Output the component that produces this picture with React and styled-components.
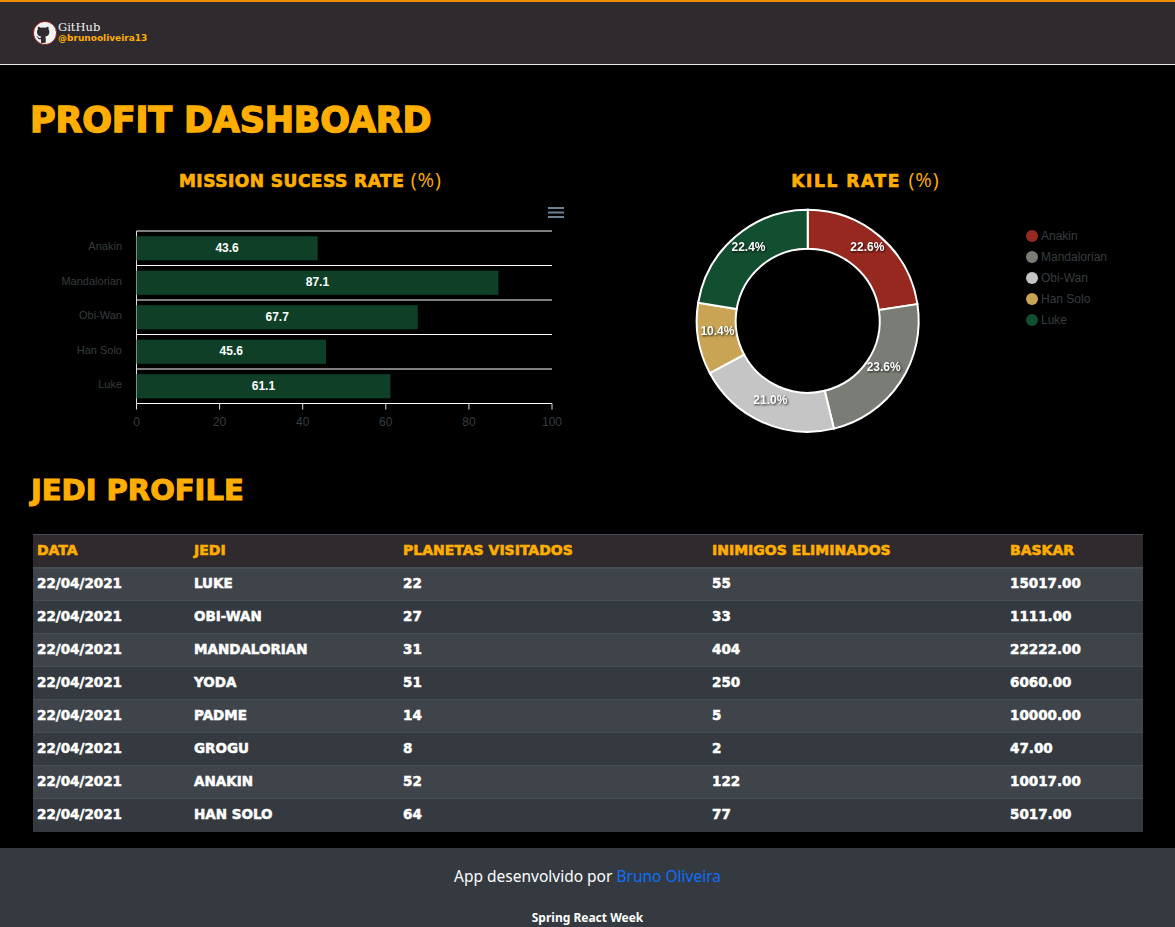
import React from 'react';
import styled, { createGlobalStyle } from 'styled-components';

const GOLD = '#ffae00';

const GlobalStyle = createGlobalStyle`
  * { box-sizing: border-box; }
  body {
    margin: 0;
    background: #000;
    font-family: "Noto Sans", sans-serif;
    color: #fff;
  }
`;

const Nav = styled.header`
  height: 65px;
  background: #2e2a2d;
  border-top: 2px solid #f08c00;
  border-bottom: 1px solid #e6e6e6;
  padding: 0 33px;
  display: flex;
  align-items: center;
`;

const GithubLink = styled.a`
  display: flex;
  align-items: center;
  gap: 1px;
  margin-top: -1px;
`;

const GithubText = styled.div`
  display: flex;
  flex-direction: column;
`;

const GithubName = styled.span`
  font-family: "DejaVu Serif", serif;
  font-size: 11.5px;
  line-height: 11px;
  color: #f2f2f2;
`;

const GithubUser = styled.span`
  font-family: "DejaVu Sans", sans-serif;
  font-weight: 700;
  font-size: 9px;
  line-height: 10px;
  color: ${GOLD};
`;

const Main = styled.main`
  padding: 0 32px 16px 33px;
`;

const PageTitle = styled.h1`
  margin: 0 0 0 -3px;
  padding-top: 34px;
  height: 103px;
  font-family: "DejaVu Sans", sans-serif;
  font-weight: 700;
  font-size: 35px;
  line-height: 42px;
  letter-spacing: -0.2px;
  color: ${GOLD};
  -webkit-text-stroke: 1.4px ${GOLD};
  text-transform: uppercase;
`;

const ChartsRow = styled.section`
  display: grid;
  grid-template-columns: 555px 555px;
`;

const ChartCard = styled.div`
  height: 302px;
`;

const ChartTitle = styled.h5`
  margin: 0;
  height: 34px;
  text-align: center;
  font-family: "DejaVu Sans", sans-serif;
  font-weight: 700;
  font-size: 17px;
  line-height: 24px;
  letter-spacing: ${(p) => p.$spacing}px;
  color: ${GOLD};
  -webkit-text-stroke: 0.7px ${GOLD};
  text-transform: uppercase;
`;

const Percent = styled.span`
  font-family: "Open Sans", sans-serif;
  font-weight: 400;
  font-size: 20px;
  letter-spacing: 1px;
  -webkit-text-stroke: 0;
`;

const ChartSvg = styled.svg`
  display: block;
  flex: none;
`;

const MenuIcon = styled.svg`
  display: block;
  margin: 5px 0 11px 515px;
`;

const AxisLabel = styled.text`
  font-family: "Liberation Sans", Arial, sans-serif;
  font-size: ${(p) => p.$size}px;
  fill: #373d3f;
`;

const BarLabel = styled.text`
  font-family: "Liberation Sans", Arial, sans-serif;
  font-size: 12px;
  font-weight: 700;
  fill: #fff;
  text-anchor: middle;
`;

const SliceLabel = styled.text`
  font-family: "Liberation Sans", Arial, sans-serif;
  font-size: 12px;
  font-weight: 700;
  fill: #fff;
  text-anchor: middle;
  dominant-baseline: central;
  filter: drop-shadow(1px 1px 1px rgba(0, 0, 0, 0.8));
`;

const DonutArea = styled.div`
  display: flex;
  align-items: flex-start;
  margin-top: 3px;
`;

const Legend = styled.ul`
  list-style: none;
  margin: 0;
  padding: 20px 0 0;
`;

const LegendItem = styled.li`
  display: flex;
  align-items: center;
  gap: 3px;
  height: 21px;
  font-family: "Liberation Sans", Arial, sans-serif;
  font-size: 12px;
  color: #373d3f;
`;

const LegendDot = styled.span`
  width: 12px;
  height: 12px;
  border-radius: 50%;
  background: ${(p) => p.$color};
`;

const SectionTitle = styled.h2`
  margin: 0 0 0 -2px;
  height: 64px;
  padding-top: 2px;
  font-family: "DejaVu Sans", sans-serif;
  font-weight: 700;
  font-size: 29px;
  line-height: 36px;
  color: ${GOLD};
  -webkit-text-stroke: 1.1px ${GOLD};
  text-transform: uppercase;
`;

const Table = styled.table`
  width: 1110px;
  border-collapse: collapse;
  table-layout: fixed;
  font-family: "DejaVu Sans", sans-serif;
  text-transform: uppercase;
`;

const HeadCell = styled.th`
  height: 33px;
  padding: 0 0 1px 4px;
  text-align: left;
  background: #2e2a2d;
  border-top: 1px solid #454d55;
  border-bottom: 2px solid #454d55;
  color: ${GOLD};
  font-size: 14px;
  font-weight: 700;
  -webkit-text-stroke: 0.6px ${GOLD};
  width: ${(p) => p.$width}px;
`;

const Row = styled.tr`
  background: ${(p) => (p.$odd ? '#3e444a' : '#343a40')};
`;

const Cell = styled.td`
  height: 33px;
  padding: 0 0 2px 4px;
  border-top: 1px solid #454d55;
  color: #fff;
  font-size: 13.5px;
  font-weight: 700;
  -webkit-text-stroke: 0.5px #fff;
`;

const Footer = styled.footer`
  height: 79px;
  background: #343a40;
  text-align: center;
`;

const FooterLine = styled.p`
  margin: 0;
  padding-top: 17px;
  font-size: 15.5px;
  line-height: 22px;
`;

const FooterLink = styled.a`
  color: #0d6efd;
  text-decoration: none;
`;

const FooterNote = styled.small`
  display: block;
  margin-top: 23px;
  font-size: 12px;
  font-weight: 700;
  line-height: 16px;
`;

const bars = [
  { name: 'Anakin', value: 43.6 },
  { name: 'Mandalorian', value: 87.1 },
  { name: 'Obi-Wan', value: 67.7 },
  { name: 'Han Solo', value: 45.6 },
  { name: 'Luke', value: 61.1 },
];

const slices = [
  { name: 'Anakin', value: 22.6, color: '#962820' },
  { name: 'Mandalorian', value: 23.6, color: '#797d75' },
  { name: 'Obi-Wan', value: 21.0, color: '#c4c5c4' },
  { name: 'Han Solo', value: 10.4, color: '#c8a454' },
  { name: 'Luke', value: 22.4, color: '#124f30' },
];

const columns = [
  { title: 'Data', width: 157 },
  { title: 'Jedi', width: 209 },
  { title: 'Planetas visitados', width: 309 },
  { title: 'Inimigos eliminados', width: 298 },
  { title: 'Baskar', width: 137 },
];

const rows = [
  ['22/04/2021', 'Luke', '22', '55', '15017.00'],
  ['22/04/2021', 'Obi-Wan', '27', '33', '1111.00'],
  ['22/04/2021', 'Mandalorian', '31', '404', '22222.00'],
  ['22/04/2021', 'Yoda', '51', '250', '6060.00'],
  ['22/04/2021', 'Padme', '14', '5', '10000.00'],
  ['22/04/2021', 'Grogu', '8', '2', '47.00'],
  ['22/04/2021', 'Anakin', '52', '122', '10017.00'],
  ['22/04/2021', 'Han Solo', '64', '77', '5017.00'],
];

// coordenadas del gráfico de barras dentro de su svg
const PLOT_X = 103.5;
const PLOT_W = 415.5;
const PLOT_Y = 2;
const ROW_H = 34.5;

const BarChart = () => (
  <ChartSvg width="555" height="205" viewBox="0 0 555 205">
    {[0, 1, 2, 3, 4, 5].map((i) => (
      <line key={i} x1={PLOT_X} x2={PLOT_X + PLOT_W} y1={PLOT_Y + i * ROW_H} y2={PLOT_Y + i * ROW_H} stroke="#fff" />
    ))}
    <line x1={PLOT_X} x2={PLOT_X} y1={PLOT_Y} y2={PLOT_Y + 5 * ROW_H} stroke="#e0e0e0" />
    {[0, 20, 40, 60, 80, 100].map((t) => {
      const x = PLOT_X + (t / 100) * PLOT_W;
      return (
        <g key={t}>
          <line x1={x} x2={x} y1={PLOT_Y + 5 * ROW_H} y2={PLOT_Y + 5 * ROW_H + 6} stroke="#e0e0e0" />
          <AxisLabel $size={12} x={x} y={PLOT_Y + 5 * ROW_H + 22} textAnchor="middle">{t}</AxisLabel>
        </g>
      );
    })}
    {bars.map((b, i) => {
      const top = PLOT_Y + i * ROW_H;
      const w = (b.value / 100) * PLOT_W;
      return (
        <g key={b.name}>
          <AxisLabel $size={11} x="89" y={top + 19} textAnchor="end">{b.name}</AxisLabel>
          <rect x={PLOT_X} y={top + 5.2} width={w} height="24.1" fill="#103f28" />
          <BarLabel x={PLOT_X + w / 2} y={top + 20.5}>{b.value}</BarLabel>
        </g>
      );
    })}
  </ChartSvg>
);

const CX = 219.7;
const CY = 115.8;
const R_OUT = 111;
const R_IN = 72;

const polar = (r, pct) => {
  const a = (pct / 100) * Math.PI * 2;
  return [CX + r * Math.sin(a), CY - r * Math.cos(a)];
};

const arcPath = (from, to) => {
  const [x1, y1] = polar(R_OUT, from);
  const [x2, y2] = polar(R_OUT, to);
  const [x3, y3] = polar(R_IN, to);
  const [x4, y4] = polar(R_IN, from);
  const large = to - from > 50 ? 1 : 0;
  return `M${x1} ${y1}A${R_OUT} ${R_OUT} 0 ${large} 1 ${x2} ${y2}L${x3} ${y3}A${R_IN} ${R_IN} 0 ${large} 0 ${x4} ${y4}Z`;
};

const DonutChart = () => {
  let acc = 0;
  return (
    <ChartSvg width="438" height="235" viewBox="0 0 438 235">
      {slices.map((s) => {
        const from = acc;
        acc += s.value;
        const [lx, ly] = polar(91.5, from + s.value / 2);
        return (
          <g key={s.name}>
            <path d={arcPath(from, acc)} fill={s.color} stroke="#fff" strokeWidth="2" />
            <SliceLabel x={lx} y={ly - 4.5}>{s.value.toFixed(1)}%</SliceLabel>
          </g>
        );
      })}
    </ChartSvg>
  );
};

const GithubIcon = () => (
  <svg width="24" height="24" viewBox="0 0 16 16">
    <circle cx="8" cy="8" r="7.7" fill="#f4f4f4" stroke="#8e1414" strokeWidth="0.6" />
    <path
      fill="#2e2a2d"
      d="M5.3 14.6v-2.4c-1.4.2-1.9-.4-2.1-.9-.1-.3-.4-.7-.7-.8-.2-.1-.5-.4 0-.4.5 0 .8.4.9.6.5.9 1.3.7 1.8.5 0-.4.2-.7.4-.8-1.5-.2-2.9-.8-2.9-3.2 0-.7.2-1.3.6-1.7-.1-.2-.3-.8.1-1.7 0 0 .6-.2 1.8.7a6 6 0 0 1 3.2 0c1.2-.9 1.8-.7 1.8-.7.4.9.2 1.5.1 1.7.4.4.6 1 .6 1.7 0 2.4-1.4 3-2.9 3.2.2.2.5.6.5 1.2v2.9Z"
    />
  </svg>
);

export default function App() {
  return (
    <>
      <GlobalStyle />
      <Nav>
        <GithubLink>
          <GithubIcon />
          <GithubText>
            <GithubName>GitHub</GithubName>
            <GithubUser>@brunooliveira13</GithubUser>
          </GithubText>
        </GithubLink>
      </Nav>
      <Main>
        <PageTitle>Profit Dashboard</PageTitle>
        <ChartsRow>
          <ChartCard>
            <ChartTitle $spacing={0.5}>Mission Sucess Rate <Percent>(%)</Percent></ChartTitle>
            <MenuIcon width="16" height="11" viewBox="0 0 16 11">
              <rect y="0" width="16" height="2" fill="#6e8192" />
              <rect y="4.5" width="16" height="2" fill="#6e8192" />
              <rect y="9" width="16" height="2" fill="#6e8192" />
            </MenuIcon>
            <BarChart />
          </ChartCard>
          <ChartCard>
            <ChartTitle $spacing={1.6}>Kill Rate <Percent>(%)</Percent></ChartTitle>
            <DonutArea>
              <DonutChart />
              <Legend>
                {slices.map((s) => (
                  <LegendItem key={s.name}>
                    <LegendDot $color={s.color} />
                    {s.name}
                  </LegendItem>
                ))}
              </Legend>
            </DonutArea>
          </ChartCard>
        </ChartsRow>
        <SectionTitle>Jedi Profile</SectionTitle>
        <Table>
          <thead>
            <tr>
              {columns.map((c) => (
                <HeadCell key={c.title} $width={c.width}>{c.title}</HeadCell>
              ))}
            </tr>
          </thead>
          <tbody>
            {rows.map((r, i) => (
              <Row key={r[1]} $odd={i % 2 === 0}>
                {r.map((v, j) => (
                  <Cell key={j}>{v}</Cell>
                ))}
              </Row>
            ))}
          </tbody>
        </Table>
      </Main>
      <Footer>
        <FooterLine>App desenvolvido por <FooterLink>Bruno Oliveira</FooterLink></FooterLine>
        <FooterNote>Spring React Week</FooterNote>
      </Footer>
    </>
  );
}
